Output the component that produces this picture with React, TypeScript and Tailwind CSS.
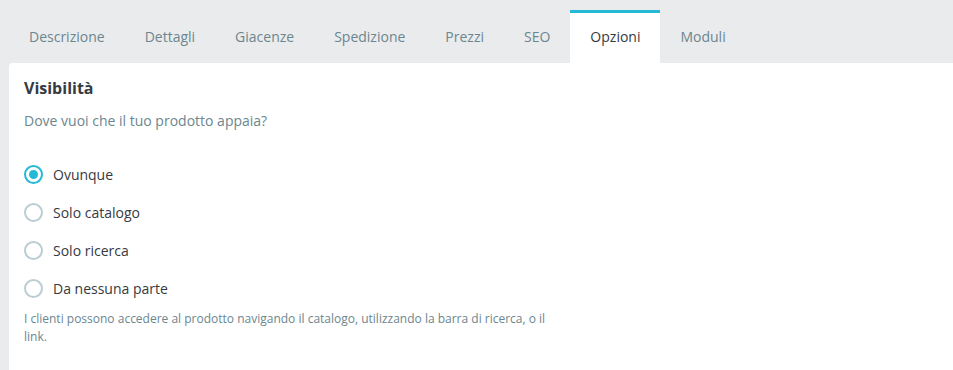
const tabs = ["Descrizione", "Dettagli", "Giacenze", "Spedizione", "Prezzi", "SEO", "Opzioni", "Moduli"];

const options = ["Ovunque", "Solo catalogo", "Solo ricerca", "Da nessuna parte"];

export default function App() {
  return (
    <div className="h-[370px] w-[953px] overflow-hidden bg-[#eaebed] font-['Open_Sans',sans-serif]">
      <div className="flex pl-[9px] pt-[10px]">
        {tabs.map((t) =>
          t === "Opzioni" ? (
            <div
              key={t}
              className="flex h-[53px] items-center border-t-[3px] border-[#25b9d7] bg-white px-5 pb-[3px] text-sm text-[#363a41]"
            >
              {t}
            </div>
          ) : (
            <div key={t} className="flex h-[53px] items-center px-5 pt-0 text-sm text-[#6c868e]">
              {t}
            </div>
          )
        )}
      </div>
      <div className="ml-[9px] h-[320px] rounded-tl-[4px] bg-white px-[15px] pt-[13px]">
        <h2 className="text-base font-bold leading-6 text-[#363a41]">Visibilità</h2>
        <p className="mt-[11px] text-sm leading-5 text-[#6c868e]">Dove vuoi che il tuo prodotto appaia?</p>
        <div className="mt-[34px] flex flex-col gap-[19px]">
          {options.map((o, i) => (
            <label key={o} className="flex h-[19px] items-center gap-[10px] text-sm text-[#363a41]">
              {i === 0 ? (
                <span className="flex h-[19px] w-[19px] items-center justify-center rounded-full border-2 border-[#25b9d7]">
                  <span className="h-[9px] w-[9px] rounded-full bg-[#25b9d7]" />
                </span>
              ) : (
                <span className="h-[19px] w-[19px] rounded-full border-2 border-[#bbcdd2]" />
              )}
              {o}
            </label>
          ))}
        </div>
        <p className="mt-[12px] w-[540px] text-xs leading-[18px] text-[#6c868e]">
          I clienti possono accedere al prodotto navigando il catalogo, utilizzando la barra di ricerca, o il link.
        </p>
      </div>
    </div>
  );
}
